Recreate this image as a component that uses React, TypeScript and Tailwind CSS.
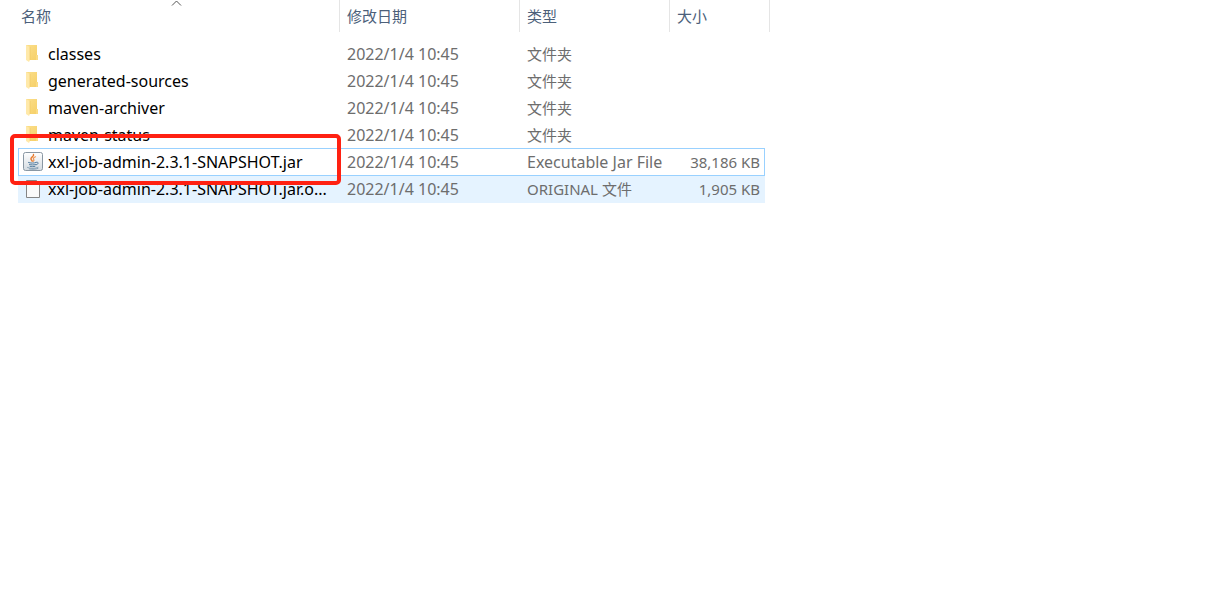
import clsx from "clsx";

type Kind = "folder" | "jar" | "file";

interface Entry {
  name: string;
  date: string;
  type: string;
  size?: string;
  kind: Kind;
  state?: "focused" | "hovered";
}

const ENTRIES: Entry[] = [
  { name: "classes", date: "2022/1/4 10:45", type: "文件夹", kind: "folder" },
  { name: "generated-sources", date: "2022/1/4 10:45", type: "文件夹", kind: "folder" },
  { name: "maven-archiver", date: "2022/1/4 10:45", type: "文件夹", kind: "folder" },
  { name: "maven-status", date: "2022/1/4 10:45", type: "文件夹", kind: "folder" },
  {
    name: "xxl-job-admin-2.3.1-SNAPSHOT.jar",
    date: "2022/1/4 10:45",
    type: "Executable Jar File",
    size: "38,186 KB",
    kind: "jar",
    state: "focused",
  },
  {
    name: "xxl-job-admin-2.3.1-SNAPSHOT.jar.o...",
    date: "2022/1/4 10:45",
    type: "ORIGINAL 文件",
    size: "1,905 KB",
    kind: "file",
    state: "hovered",
  },
];

function FolderIcon() {
  return (
    <svg width="20" height="20" viewBox="0 0 20 20" aria-hidden="true">
      <defs>
        <linearGradient id="folder-back" x1="0" y1="0" x2="1" y2="1">
          <stop offset="0" stopColor="#fbdf8c" />
          <stop offset="1" stopColor="#f6cf66" />
        </linearGradient>
      </defs>
      <path d="M3 1h11v10h1v5H3z" fill="url(#folder-back)" />
      <path d="M13 11h2v5h-2z" fill="#fadb84" />
      <path d="M3 1l4 2v13l-1 2-3-2z" fill="#ffe9a9" />
      <path d="M7 3v13" stroke="#efc860" strokeWidth="0.6" />
    </svg>
  );
}

function JarIcon() {
  return (
    <svg width="20" height="20" viewBox="0 0 20 20" aria-hidden="true">
      <defs>
        <linearGradient id="jar-plate" x1="0" y1="0" x2="0" y2="1">
          <stop offset="0" stopColor="#ffffff" />
          <stop offset="1" stopColor="#d3dae0" />
        </linearGradient>
      </defs>
      <rect x="0.5" y="0.5" width="19" height="18" rx="2" fill="url(#jar-plate)" stroke="#8997a3" />
      <g fill="none" strokeLinecap="round">
        <path d="M10.5 2.500c1 2-3.5 2.800-2.500 4.800.3.700 1.200 1.200 1.200 2" stroke="#e8792b" strokeWidth="1.400" />
        <path d="M12.500 4.800c-2 .8-2.500 1.500-1.800 2.500.5.700.3 1.300-.4 1.900" stroke="#ee9350" strokeWidth="1.200" />
        <path d="M5.500 10.500c2 .8 5.500.8 7.500 0M6.500 12.500c2 .6 4 .6 6 0M7 14.300c1.700.5 3.500.5 5 0" stroke="#547d9f" />
        <path d="M13.500 10.300c2.500-.6 2.300 1.900-.3 2.500" stroke="#547d9f" />
        <path d="M4.500 15.500c2.500 1.300 8.500 1.300 10.500-.2M6.500 17c3 .5 6.500.3 8.500-.6" stroke="#7895ad" strokeWidth="0.800" />
      </g>
    </svg>
  );
}

function FileIcon() {
  return (
    <svg width="20" height="20" viewBox="0 0 20 20" aria-hidden="true">
      <path d="M3.500 1.500h10l3 3v14h-13z" fill="#fafafa" stroke="#858585" />
      <path d="M13.500 1.500v3h3" fill="#ffffff" stroke="#858585" />
    </svg>
  );
}

function EntryIcon({ kind }: { kind: Kind }) {
  if (kind === "folder") return <FolderIcon />;
  if (kind === "jar") return <JarIcon />;
  return <FileIcon />;
}

function HeaderCell({ label, sorted, span }: { label: string; sorted?: boolean; span?: number }) {
  return (
    <th
      scope="col"
      colSpan={span}
      aria-sort={sorted ? "ascending" : undefined}
      className="relative h-8 border-r border-[#e5e5e5] p-0 text-left font-normal text-[#4c607a]"
    >
      <button type="button" className={clsx("block w-full text-left leading-8", sorted ? "pl-[3px]" : "pl-[7px]")}>
        {label}
      </button>
      {sorted && (
        <svg
          className="absolute top-0 left-[152px]"
          width="13"
          height="7"
          viewBox="0 0 13 7"
          aria-hidden="true"
        >
          <path d="M2 5.500L6.500 1L11 5.500" fill="none" stroke="#555555" />
        </svg>
      )}
    </th>
  );
}

function EntryRow({ entry }: { entry: Entry }) {
  const focused = entry.state === "focused";
  const hovered = entry.state === "hovered";
  const cell = clsx(
    "whitespace-nowrap",
    focused && "border-y border-[#99d1ff]",
    hovered && "bg-[#e5f3ff] pb-0.5",
  );

  return (
    <tr className={clsx("text-[#6d6d6d]", focused ? "h-7" : "h-[27px]")}>
      <td className={clsx(cell, "relative text-base leading-6", focused && "border-l")}>
        <div className={clsx("flex items-center gap-[5px] text-black", focused ? "pl-1" : "pl-[5px]")}>
          <span className="shrink-0">
            <EntryIcon kind={entry.kind} />
          </span>
          <span>{entry.name}</span>
        </div>
        {focused && (
          <div className="pointer-events-none absolute -top-[15px] -right-px -bottom-[10px] -left-[9px] z-10 rounded-[5px] border-4 border-[#ff2112]" />
        )}
      </td>
      <td className={clsx(cell, "pl-[7px] text-base leading-6")}>{entry.date}</td>
      <td className={clsx(cell, "pl-[7px]", entry.kind === "jar" && "text-base leading-6")}>{entry.type}</td>
      <td className={clsx(cell, "text-right", focused ? "border-r pr-1" : "pr-[5px]")}>{entry.size}</td>
      <td />
    </tr>
  );
}

export default function App() {
  return (
    <main className="min-h-screen overflow-x-auto bg-white pl-[18px] font-['Noto_Sans','Noto_Sans_CJK_SC',sans-serif] text-[15px] leading-6">
      <table className="w-[752px] table-fixed border-separate border-spacing-0">
        <colgroup>
          <col className="w-[322px]" />
          <col className="w-[180px]" />
          <col className="w-[150px]" />
          <col className="w-[95px]" />
          <col className="w-[5px]" />
        </colgroup>
        <thead>
          <tr>
            <HeaderCell label="名称" sorted />
            <HeaderCell label="修改日期" />
            <HeaderCell label="类型" />
            <HeaderCell label="大小" span={2} />
          </tr>
        </thead>
        <tbody className="before:block before:h-2">
          {ENTRIES.map((entry) => (
            <EntryRow key={entry.name} entry={entry} />
          ))}
        </tbody>
      </table>
    </main>
  );
}
